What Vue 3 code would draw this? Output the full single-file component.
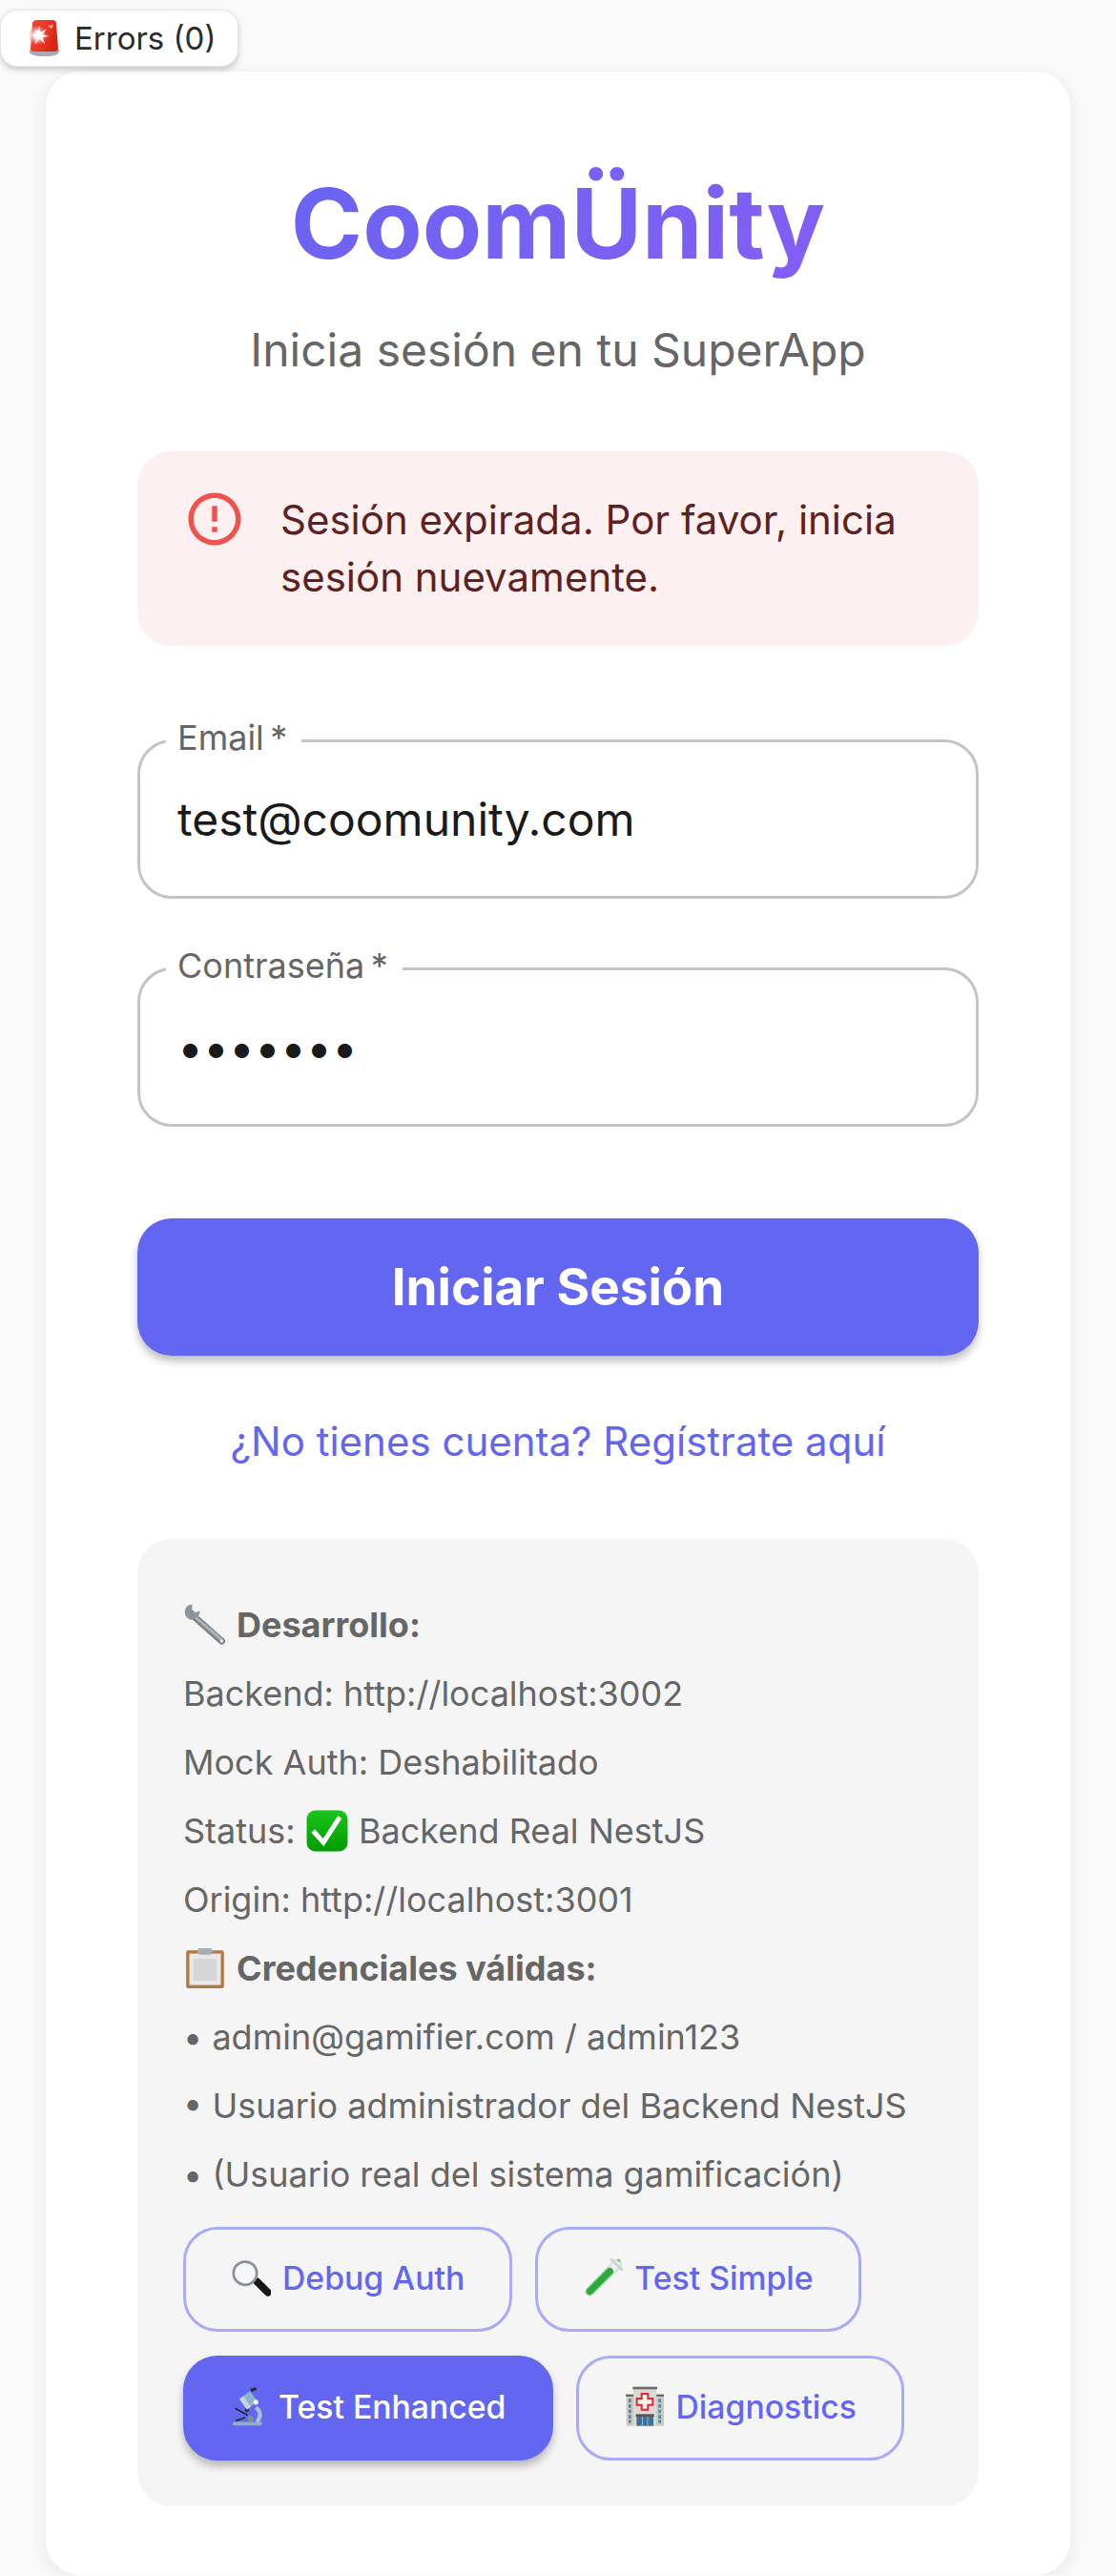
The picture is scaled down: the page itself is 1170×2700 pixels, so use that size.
<script setup>
import { ref } from 'vue'

const email = ref('test@coomunity.com')
const password = ref('1234567')
</script>

<template>
  <div class="page">
    <!-- error counter, floats over the page -->
    <button class="errors-chip">
      <svg class="siren" viewBox="0 0 31 38">
        <defs>
          <linearGradient id="sirenRed" x1="0" y1="0" x2="1" y2="0.5">
            <stop offset="0" stop-color="#f2453a" />
            <stop offset="0.6" stop-color="#ec3527" />
            <stop offset="1" stop-color="#d92410" />
          </linearGradient>
          <radialGradient id="sirenGlow" cx="0.4" cy="0.5" r="0.5">
            <stop offset="0" stop-color="#fff" />
            <stop offset="0.35" stop-color="#ffd9d2" />
            <stop offset="1" stop-color="#ff7a6c" stop-opacity="0" />
          </radialGradient>
        </defs>
        <path d="M0 33 Q0 30 3 30 H28 Q31 30 31 33 Q31 38 15.5 38 Q0 38 0 33 Z" fill="#a9adb0" />
        <path d="M3 4 Q3 0 8 0 H24 Q28 0 28 4 L30 30 Q30 33 26 33 H5 Q1 33 1 30 Z" fill="url(#sirenRed)" />
        <circle cx="10" cy="16" r="11" fill="url(#sirenGlow)" />
        <path d="M10 6 L11.5 13 L18 9 L13.5 15 L21 17 L13.5 18 L16 25 L10.5 19.5 L6 25 L7.5 18 L1.5 16 L7.5 14 L5 8 L9 12 Z" fill="#fff" />
        <path d="M19 6 L25 5 L23 9 Z" fill="#ffb3a8" />
      </svg>
      <span>Errors (0)</span>
    </button>

    <main class="card">
      <h1 class="logo">CoomÜnity</h1>
      <p class="subtitle">Inicia sesión en tu SuperApp</p>

      <div class="alert">
        <svg class="alert-icon" viewBox="0 0 24 24">
          <path d="M11 15h2v2h-2zm0-8h2v6h-2zm.99-5C6.47 2 2 6.48 2 12s4.47 10 9.99 10C17.52 22 22 17.52 22 12S17.52 2 11.99 2zM12 20c-4.42 0-8-3.58-8-8s3.58-8 8-8 8 3.58 8 8-3.58 8-8 8z" />
        </svg>
        <p>Sesión expirada. Por favor, inicia sesión nuevamente.</p>
      </div>

      <form class="login-form" @submit.prevent>
        <div class="field">
          <label for="email">Email&thinsp;*</label>
          <input id="email" v-model="email" type="email" />
        </div>
        <div class="field">
          <label for="password">Contraseña&thinsp;*</label>
          <input id="password" v-model="password" type="password" />
        </div>
        <button class="btn-login" type="submit">Iniciar Sesión</button>
      </form>

      <a class="register-link" href="#">¿No tienes cuenta? Regístrate aquí</a>

      <section class="dev-box">
        <p class="dev-line">
          <svg class="emoji emoji-lead" viewBox="25 0 135 135">
            <path d="M58 42 L146 120" stroke="#7d858c" stroke-width="22" stroke-linecap="round" />
            <path d="M58 40 L148 118" stroke="#aeb5ba" stroke-width="9" />
            <path d="M52 2 Q30 2 27 25 Q27 45 48 52 L62 45 Q76 38 76 22 L62 28 L50 18 Z" fill="#8d959c" />
            <circle cx="146" cy="120" r="5" fill="#eee" />
          </svg>
          <strong>Desarrollo:</strong>
        </p>
        <p class="dev-line">Backend: http://localhost:3002</p>
        <p class="dev-line">Mock Auth: Deshabilitado</p>
        <p class="dev-line">
          Status:
          <svg class="emoji" viewBox="0 0 40 40">
            <defs>
              <linearGradient id="checkGreen" x1="0" y1="0" x2="0" y2="1">
                <stop offset="0" stop-color="#1cc41c" />
                <stop offset="1" stop-color="#009c00" />
              </linearGradient>
            </defs>
            <rect x="0.5" y="0.5" width="39" height="39" rx="8" fill="url(#checkGreen)" />
            <path d="M6.6 20 L16.4 31 L32 7" fill="none" stroke="#fff" stroke-width="4.5" />
          </svg>
          Backend Real NestJS
        </p>
        <p class="dev-line">Origin: http://localhost:3001</p>
        <p class="dev-line">
          <svg class="emoji emoji-lead" viewBox="0 0 40 40">
            <rect x="2" y="3" width="36" height="36" rx="2" fill="#b07a45" />
            <rect x="5" y="6" width="30" height="30" fill="#e8e8e8" />
            <rect x="9" y="11" width="22" height="21" fill="#d6d6d6" />
            <rect x="13" y="1" width="14" height="6" rx="2" fill="#a8adb2" />
          </svg>
          <strong>Credenciales válidas:</strong>
        </p>
        <p class="dev-line">• admin@gamifier.com / admin123</p>
        <p class="dev-line">• Usuario administrador del Backend NestJS</p>
        <p class="dev-line">• (Usuario real del sistema gamificación)</p>

        <div class="dev-actions">
          <button class="btn-dev">
            <svg class="emoji" viewBox="0 0 40 40">
              <path d="M26.4 24.5 L37 35" stroke="#17181a" stroke-width="7.5" stroke-linecap="round" />
              <circle cx="14.3" cy="15.9" r="11.6" fill="#f6f7f8" stroke="#8b9196" stroke-width="2.6" />
            </svg>
            Debug Auth
          </button>
          <button class="btn-dev">
            <svg class="emoji" viewBox="0 0 40 40">
              <path d="M7 34 L34 7" stroke="#c3ccc8" stroke-width="9.5" stroke-linecap="round" />
              <path d="M7 34 L34 7" stroke="#eef2f0" stroke-width="7.5" stroke-linecap="round" />
              <path d="M7 34 L27 14" stroke="#2bab38" stroke-width="7" stroke-linecap="round" />
              <path d="M29 2.5 L38.5 12" stroke="#cfd6d3" stroke-width="3" stroke-linecap="round" />
              <circle cx="36" cy="3" r="1.3" fill="#4fd06a" />
            </svg>
            Test Simple
          </button>
          <button class="btn-dev btn-dev-active">
            <svg class="emoji emoji-narrow" viewBox="24 18 117 126">
              <rect x="30" y="132" width="95" height="11" rx="3" fill="#8fb0c4" />
              <path d="M105 85 Q130 105 108 132" fill="none" stroke="#a7c2d0" stroke-width="13" />
              <path d="M38 88 L78 110" stroke="#23262a" stroke-width="5" />
              <path d="M40 128 L70 118" stroke="#23262a" stroke-width="5" />
              <circle cx="88" cy="121" r="10" fill="#7f8f98" />
              <path d="M68 92 L78 84 L84 94 L74 102 Z" fill="#2a2d30" />
              <path d="M52 58 L86 32 L110 66 L76 92 Z" fill="#8fb3cf" />
              <path d="M52 58 L65 48 L88 84 L76 92 Z" fill="#c3d5e2" />
              <path d="M88 30 L106 24" stroke="#2a2d30" stroke-width="10" />
              <circle cx="105" cy="68" r="8" fill="#f4f6f8" />
            </svg>
            Test Enhanced
          </button>
          <button class="btn-dev">
            <svg class="emoji" viewBox="12 18 126 126">
              <rect x="20" y="48" width="26" height="95" fill="#cbc7bf" />
              <rect x="112" y="48" width="26" height="95" fill="#cbc7bf" />
              <rect x="18" y="44" width="28" height="6" fill="#5a5a5a" />
              <rect x="112" y="44" width="28" height="6" fill="#5a5a5a" />
              <rect x="42" y="24" width="73" height="119" fill="#dcd9d3" />
              <rect x="40" y="20" width="77" height="8" fill="#6c6c6c" />
              <path d="M68 42 h20 v15 h15 v20 h-15 v15 h-20 v-15 h-15 v-20 h15 z" fill="#f5f1ec" stroke="#e0263a" stroke-width="6" />
              <rect x="52" y="108" width="53" height="35" fill="#3f7296" />
              <rect x="50" y="106" width="57" height="8" fill="#555" />
              <rect x="70" y="114" width="2" height="29" fill="#c9d6df" />
              <rect x="86" y="114" width="2" height="29" fill="#c9d6df" />
              <rect x="27" y="58" width="8" height="11" fill="#4f86ab" />
              <rect x="27" y="75" width="8" height="11" fill="#4f86ab" />
              <rect x="27" y="92" width="8" height="11" fill="#4f86ab" />
              <rect x="27" y="109" width="8" height="11" fill="#4f86ab" />
              <rect x="27" y="124" width="8" height="10" fill="#4f86ab" />
              <rect x="121" y="58" width="8" height="11" fill="#4f86ab" />
              <rect x="121" y="75" width="8" height="11" fill="#4f86ab" />
              <rect x="121" y="92" width="8" height="11" fill="#4f86ab" />
              <rect x="121" y="109" width="8" height="11" fill="#4f86ab" />
              <rect x="121" y="124" width="8" height="10" fill="#4f86ab" />
            </svg>
            Diagnostics
          </button>
        </div>
      </section>
    </main>
  </div>
</template>

<style>
body {
  background: #fafafa;
}
</style>

<style scoped>
.page {
  font-family: Inter, "Liberation Sans", sans-serif;
  padding: 75px 48px 0;
  box-sizing: border-box;
  overflow: hidden;
}

.errors-chip {
  position: absolute;
  top: 10px;
  left: 0;
  width: 250px;
  height: 60px;
  display: flex;
  align-items: center;
  gap: 16px;
  padding: 0 0 0 30px;
  background: #fff;
  border: 1px solid #e6e6e6;
  border-radius: 18px;
  box-shadow: 0 3px 6px rgba(0, 0, 0, 0.2);
  font: 400 33px Inter, sans-serif;
  color: #2a2a2a;
  box-sizing: border-box;
}

.siren {
  flex: none;
  width: 31px;
  height: 38px;
}

.card {
  background: #fff;
  border-radius: 36px;
  padding: 96px 96px 72px;
  box-shadow: 0 4px 20px rgba(0, 0, 0, 0.08);
}

.logo {
  margin: 0;
  text-align: center;
  font-size: 102px;
  line-height: 126px;
  font-weight: 700;
  background: linear-gradient(135deg, #6366f1, #8b5cf6);
  background-clip: text;
  -webkit-background-clip: text;
  color: transparent;
}

.subtitle {
  margin: 34px 0 0;
  text-align: center;
  font-size: 48px;
  line-height: 72px;
  color: #666;
}

.alert {
  display: flex;
  gap: 36px;
  margin-top: 70px;
  padding: 42px 48px;
  background: #fcf0f0;
  border-radius: 36px;
  color: #5f2120;
}

.alert p {
  margin: 0;
  font-size: 42px;
  line-height: 60px;
}

.alert-icon {
  flex: none;
  width: 66px;
  height: 66px;
  margin-top: -4px;
  fill: #ef5350;
}

.login-form {
  margin-top: 98px;
  display: flex;
  flex-direction: column;
}

.field {
  position: relative;
  margin-bottom: 72px;
}

.field label {
  position: absolute;
  top: -24px;
  left: 30px;
  padding: 0 15px 0 12px;
  background: #fff;
  font-size: 36px;
  line-height: 44px;
  color: #666;
}

.field input {
  display: block;
  width: 100%;
  height: 167px;
  box-sizing: border-box;
  padding: 0 39px;
  border: 3px solid #c4c4c4;
  border-radius: 36px;
  background: #fff;
  outline: none;
  font: 400 48px Inter, sans-serif;
  color: #1a1a1a;
}

.btn-login {
  height: 144px;
  margin-top: 24px;
  border: none;
  border-radius: 36px;
  background: #6366f1;
  color: #fff;
  font: 700 53px Inter, sans-serif;
  box-shadow: 0 6px 9px rgba(0, 0, 0, 0.25);
}

.register-link {
  display: block;
  margin-top: 60px;
  text-align: center;
  font-size: 42px;
  line-height: 60px;
  color: #6366f1;
  text-decoration: none;
}

.dev-box {
  margin-top: 72px;
  padding: 60px 48px 48px;
  background: #f5f5f5;
  border-radius: 36px;
  color: #666;
}

.dev-line {
  margin: 0 0 12px;
  font-size: 36px;
  line-height: 60px;
  white-space: nowrap;
}

.emoji {
  display: inline-block;
  width: 46px;
  height: 44px;
  vertical-align: -9px;
}

.emoji-lead {
  margin-right: 10px;
}

.dev-actions {
  display: flex;
  flex-wrap: wrap;
  gap: 25px 24px;
  margin-top: 25px;
}

.btn-dev {
  height: 110px;
  padding: 0 47px 3px;
  display: flex;
  align-items: center;
  gap: 12px;
  border: 3px solid #a9abf4;
  border-radius: 36px;
  background: transparent;
  color: #6366f1;
  font: 500 33.75px Inter, sans-serif;
}

.btn-dev .emoji {
  width: 42px;
  height: 42px;
  margin-top: -1px;
}

.btn-dev .emoji-narrow {
  width: 38px;
}

.btn-dev-active {
  background: #6366f1;
  border-color: #6366f1;
  color: #fff;
  box-shadow: 0 6px 9px rgba(0, 0, 0, 0.25);
}
</style>
